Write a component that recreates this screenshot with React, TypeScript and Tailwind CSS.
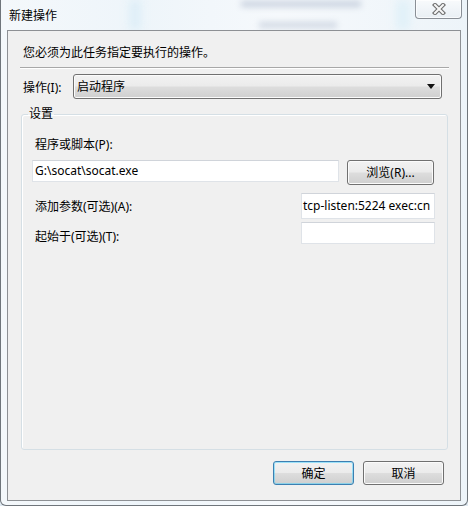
import React from "react";

const font = { fontFamily: '"Noto Sans", "Noto Sans CJK SC", sans-serif' };

function CloseGlyph() {
  return (
    <svg width="14" height="12" viewBox="0 0 14 12">
      <path d="M3 2 L11 10 M11 2 L3 10" stroke="#6e6e6e" strokeWidth="4.2" strokeLinecap="square" />
      <path d="M3 2 L11 10 M11 2 L3 10" stroke="#f7f7f7" strokeWidth="2" strokeLinecap="square" />
    </svg>
  );
}

function WinButton({ label, primary }: { label: string; primary?: boolean }) {
  return (
    <button
      className={
        "h-[24px] w-[81px] rounded-[3px] border text-[12px] text-black pt-[1px] bg-[linear-gradient(#f2f2f2_0%,#ebebeb_48%,#dddddd_52%,#cfcfcf_100%)] " +
        (primary
          ? "border-[#3c7fb1] shadow-[inset_0_0_0_1px_#48d1ff80]"
          : "border-[#707070] shadow-[inset_0_0_0_1px_#fbfbfb]")
      }
    >
      {label}
    </button>
  );
}

export default function App() {
  return (
    <div className="w-[468px] h-[506px] bg-[#dfe9f1] text-black text-[12px] leading-[16px]" style={font}>
      <div className="relative flex flex-col h-full border-l border-r border-b border-[#6f757b] rounded-b-[6px] overflow-hidden bg-[linear-gradient(90deg,#f4f8fb_0%,#eef5fa_30%,#f6f9fc_60%,#edf4f9_100%)]">
        {/* glass blur of the window behind */}
        <div className="absolute left-[240px] top-[1px] w-[120px] h-[6px] bg-[#8797b3] opacity-40 blur-[3px]" />
        <div className="absolute left-[258px] top-[22px] w-[78px] h-[6px] bg-[#8d9cb6] opacity-35 blur-[3px]" />
        <div className="absolute left-[128px] top-0 w-[12px] h-[30px] bg-[#cfe8f5] opacity-50 blur-[4px]" />
        <div className="absolute left-[395px] top-0 w-[14px] h-[30px] bg-[#d2ecf7] opacity-50 blur-[4px]" />

        {/* title bar */}
        <div className="relative h-[30px] flex items-start justify-between">
          <div className="pl-[8px] pt-[8px] text-[12px] text-black">新建操作</div>
          <div className="mr-[5px] w-[47px] h-[19px] flex items-center justify-center rounded-b-[4px] border border-t-0 border-[#8a8f96] bg-[linear-gradient(#f8fafc,#e9eff4)] shadow-[inset_0_0_0_1px_#ffffffb0]">
            <CloseGlyph />
          </div>
        </div>

        {/* client area */}
        <div className="relative flex px-[6px]">
          <div className="w-[454px] h-[471px] border border-[#8d9094] bg-[#f0f0f0] flex flex-col">
            <p className="mt-[14px] ml-[15px]">您必须为此任务指定要执行的操作。</p>
            <div className="mt-[6px] ml-[12px] w-[429px] h-[2px] border-t border-[#a8a8a8] border-b border-b-white" />

            <div className="mt-[5px] flex items-center">
              <span className="ml-[15px] w-[50px] pt-[3px]">操作(I):</span>
              <div className="w-[369px] h-[25px] rounded-[3px] border border-[#707070] bg-[linear-gradient(#f2f2f2_0%,#ebebeb_48%,#dddddd_52%,#cfcfcf_100%)] shadow-[inset_0_0_0_1px_#fbfbfb] flex items-center justify-between pl-[3px] pr-[6px]">
                <span className="pt-[1px]">启动程序</span>
                <svg width="8" height="5" viewBox="0 0 8 5">
                  <path d="M0 0 H8 L4 5 Z" fill="#111" />
                </svg>
              </div>
            </div>

            <fieldset className="mt-[7px] ml-[13px] w-[427px] h-[344px] border border-[#d5dfe5] rounded-[3px] shadow-[inset_1px_1px_0_#ffffff]">
              <legend className="ml-[6px] px-[1px]">设置</legend>
              <div className="pl-[10px] pr-[12px]">
                <div className="mt-[15px] ml-[3px]">程序或脚本(P):</div>
                <div className="mt-[7px] flex items-start">
                  <div className="w-[307px] h-[22px] bg-white border border-[#dfe3e8] border-t-[#d0d4da] flex items-center pl-[2px]">
                    G:\socat\socat.exe
                  </div>
                  <div className="ml-[8px]">
                    <button className="h-[25px] w-[87px] rounded-[3px] border border-[#707070] bg-[linear-gradient(#f2f2f2_0%,#ebebeb_48%,#dddddd_52%,#cfcfcf_100%)] shadow-[inset_0_0_0_1px_#fbfbfb] text-[12px] pt-[1px]">
                      浏览(R)...
                    </button>
                  </div>
                </div>

                <div className="mt-[8px] flex items-center justify-between">
                  <span className="ml-[3px] pt-[2px]">添加参数(可选)(A):</span>
                  <div className="w-[134px] h-[26px] bg-white border border-[#dfe3e8] border-t-[#d0d4da] flex items-center pl-[1px] whitespace-nowrap">
                    tcp-listen:5224 exec:cn
                  </div>
                </div>

                <div className="mt-[3px] flex items-start justify-between">
                  <span className="ml-[3px] pt-[7px]">起始于(可选)(T):</span>
                  <div className="w-[134px] h-[22px] bg-white border border-[#dfe3e8] border-t-[#d0d4da]" />
                </div>
              </div>
            </fieldset>

            <div className="mt-[11px] mr-[16px] flex justify-end gap-[9px]">
              <WinButton label="确定" primary />
              <WinButton label="取消" />
            </div>
          </div>
        </div>
      </div>
    </div>
  );
}
